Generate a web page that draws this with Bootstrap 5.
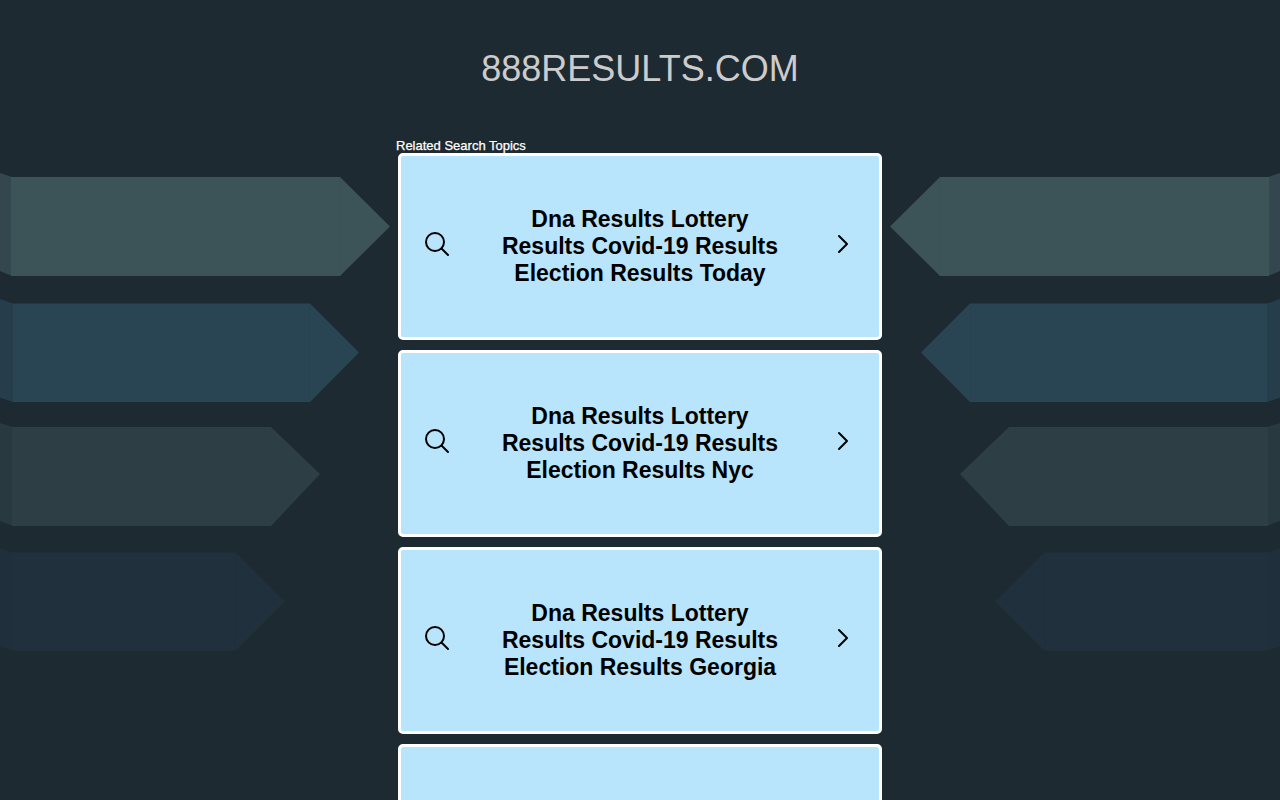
<!DOCTYPE html>
<html lang="en">
<head>
<meta charset="utf-8">
<meta name="viewport" content="width=device-width, initial-scale=1">
<title>888results.com</title>
<link href="https://cdn.jsdelivr.net/npm/bootstrap@5.3.0/dist/css/bootstrap.min.css" rel="stylesheet">
<style>
body { background: #1e2a32; font-family: "Liberation Sans", Arial, sans-serif; }
.page { isolation: isolate; }
.domain { color: #ccc; font-size: 36px; line-height: 40px; padding-top: 49px; margin-bottom: 49px; }
.results { max-width: 488px; }
.results-title { font-size: 13px; line-height: 15px; color: #fff; -webkit-text-stroke: .25px #fff; }
.topics { gap: 10px; padding: 0 2px; }
.topic { min-height: 187px; background: #b8e4fc; border: 3px solid #fff; border-radius: 5px; padding: 0 24px; color: #000; }
.topic-text { font-size: 23px; line-height: 27px; max-width: 290px; }
.topic svg { margin-bottom: 5px; }
.ribbons { top: 160px; z-index: -1; }
.ribbons-right { transform: scaleX(-1); }
</style>
</head>
<body>
<div class="page position-relative vh-100 overflow-hidden">
  <svg class="ribbons position-absolute start-0" width="400" height="500" aria-hidden="true">
    <g id="ribbons">
      <path fill="#34474e" d="M0 13L12 17V116L0 111Z"/>
      <path fill="#3c5358" d="M11 17H340L390 66.500L340 116H11Z"/>
      <path fill="none" stroke="#395056" d="M340.500 18V115"/>
      <path fill="#263e4b" d="M0 139L13 143.500V242L0 237.500Z"/>
      <path fill="#294554" d="M13 143.500H310L359 192.500L310 242H13Z"/>
      <path fill="none" stroke="#284251" d="M309.500 145V241"/>
      <path fill="#293940" d="M0 263L13 267V366L0 361Z"/>
      <path fill="#2d3e44" d="M12 267H271L320 314L271 366H12Z"/>
      <path fill="#1f2f3b" d="M0 388L13 392.500V490.500L0 486.500Z"/>
      <path fill="#20303c" d="M12 392.500H236L285 441.500L236 490.500H12Z"/>
      <path fill="none" stroke="#1f2f3a" d="M235.500 393V490"/>
    </g>
  </svg>
  <svg class="ribbons ribbons-right position-absolute end-0" width="400" height="500" aria-hidden="true"><use href="#ribbons"/></svg>

  <h1 class="domain text-center fw-normal">888RESULTS.COM</h1>

  <main class="results mx-auto">
    <h2 class="results-title mb-0 fw-normal">Related Search Topics</h2>
    <div class="topics d-flex flex-column">
      <a href="#" class="topic d-flex align-items-center justify-content-between text-decoration-none">
        <svg width="26" height="26" viewBox="0 0 26 26" fill="none" stroke="#000" stroke-width="2" aria-hidden="true"><circle cx="10" cy="11" r="9"/><path d="M16.500 17.500L23 24" stroke-linecap="round"/></svg>
        <span class="topic-text fw-bold text-center">Dna Results Lottery Results Covid-19 Results Election Results Today</span>
        <svg width="26" height="26" viewBox="0 0 26 26" fill="none" stroke="#000" stroke-width="2" stroke-linecap="round" stroke-linejoin="round" aria-hidden="true"><path d="M10 5L18 13L10 21"/></svg>
      </a>
      <a href="#" class="topic d-flex align-items-center justify-content-between text-decoration-none">
        <svg width="26" height="26" viewBox="0 0 26 26" fill="none" stroke="#000" stroke-width="2" aria-hidden="true"><circle cx="10" cy="11" r="9"/><path d="M16.500 17.500L23 24" stroke-linecap="round"/></svg>
        <span class="topic-text fw-bold text-center">Dna Results Lottery Results Covid-19 Results Election Results Nyc</span>
        <svg width="26" height="26" viewBox="0 0 26 26" fill="none" stroke="#000" stroke-width="2" stroke-linecap="round" stroke-linejoin="round" aria-hidden="true"><path d="M10 5L18 13L10 21"/></svg>
      </a>
      <a href="#" class="topic d-flex align-items-center justify-content-between text-decoration-none">
        <svg width="26" height="26" viewBox="0 0 26 26" fill="none" stroke="#000" stroke-width="2" aria-hidden="true"><circle cx="10" cy="11" r="9"/><path d="M16.500 17.500L23 24" stroke-linecap="round"/></svg>
        <span class="topic-text fw-bold text-center">Dna Results Lottery Results Covid-19 Results Election Results Georgia</span>
        <svg width="26" height="26" viewBox="0 0 26 26" fill="none" stroke="#000" stroke-width="2" stroke-linecap="round" stroke-linejoin="round" aria-hidden="true"><path d="M10 5L18 13L10 21"/></svg>
      </a>
      <div class="topic"></div>
    </div>
  </main>
</div>
<script src="https://cdn.jsdelivr.net/npm/bootstrap@5.3.0/dist/js/bootstrap.bundle.min.js"></script>
</body>
</html>
